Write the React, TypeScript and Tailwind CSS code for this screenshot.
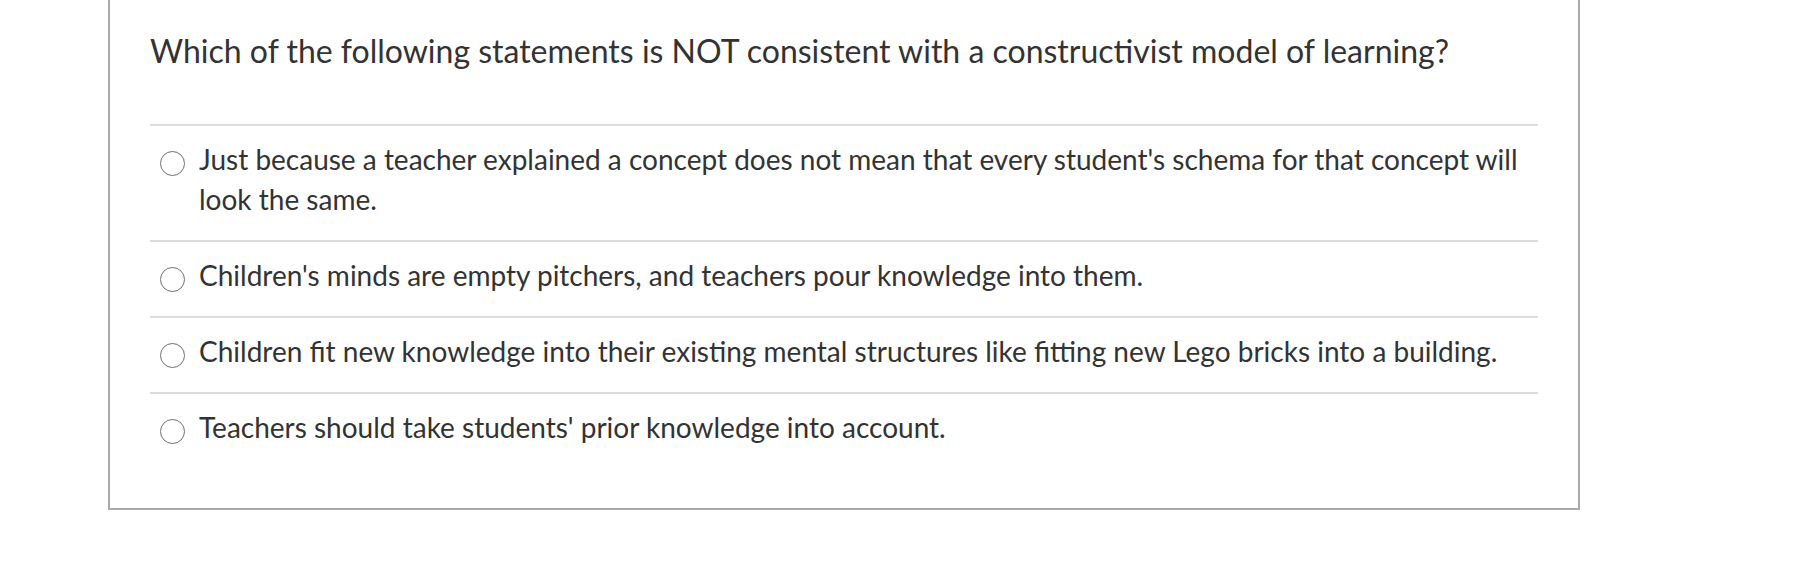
import React from "react";

const answers = [
  "Just because a teacher explained a concept does not mean that every student's schema for that concept will look the same.",
  "Children's minds are empty pitchers, and teachers pour knowledge into them.",
  "Children fit new knowledge into their existing mental structures like fitting new Lego bricks into a building.",
  "Teachers should take students' prior knowledge into account.",
];

const App: React.FC = () => {
  return (
    <div className="w-full h-[564px] bg-white font-['Lato',sans-serif] text-[#333333]">
      <div className="ml-[108px] w-[1472px] border-x-2 border-b-2 border-[#a9a9a9] bg-white pt-[31px] px-[40px] pb-[40px]">
        <h2 className="text-[32px] leading-[40px] font-normal">
          Which of the following statements is NOT consistent with a constructivist model of learning?
        </h2>

        <ul className="mt-[53px]">
          {answers.map((text) => (
            <li
              key={text}
              className="flex items-start border-t-2 border-[#dcdcdc] pt-[13px] pb-[21px]"
            >
              <span className="ml-[10px] mt-[12px] mr-[14px] w-[25px] h-[25px] shrink-0 rounded-full border-[1.5px] border-[#717171] bg-white" />
              <span className="text-[28px] leading-[40px]">{text}</span>
            </li>
          ))}
        </ul>
      </div>
    </div>
  );
};

export default App;
